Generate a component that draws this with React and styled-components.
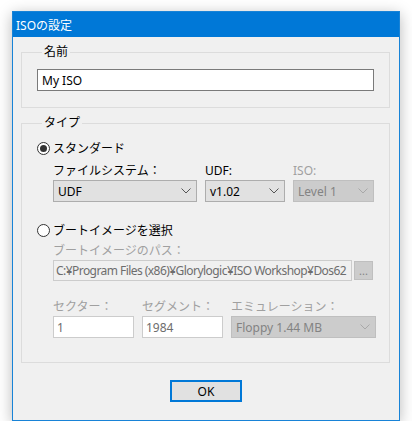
import React from "react";
import styled, { createGlobalStyle, css } from "styled-components";

const GlobalStyle = createGlobalStyle`
  html, body {
    margin: 0;
    padding: 0;
    background: #ffffff;
  }
  body {
    font-family: "Segoe UI", "Noto Sans", "Noto Sans CJK JP", sans-serif;
    font-size: 12px;
    color: #000000;
  }
`;

const Page = styled.div`
  padding: 11px 0 0 12px;
`;

const Window = styled.div`
  width: 386px;
  height: 408px;
  border: 1px solid #1883d7;
  background: #f0f0f0;
  box-shadow: 0 3px 14px rgba(0, 0, 0, 0.28);
  display: flex;
  flex-direction: column;
`;

const TitleBar = styled.div`
  height: 25px;
  background: #0078d7;
  color: #ffffff;
  display: flex;
  align-items: center;
  padding-left: 3px;
  font-size: 12px;
`;

const Body = styled.div`
  padding: 7px 9px 0 8px;
  display: flex;
  flex-direction: column;
`;

const Group = styled.fieldset`
  margin: ${props => props.top || 0}px 0 0 0;
  padding: 0 0 ${props => props.bottom || 0}px 15px;
  border: 1px solid #dcdcdc;
  min-width: 0;
  display: flex;
  flex-direction: column;
`;

const Legend = styled.legend`
  padding: 0 2px;
  margin-left: 5px;
  line-height: 16px;
  font-size: 12px;
`;

const TextInput = styled.div`
  height: 20px;
  border: 1px solid ${props => (props.disabled ? "#cccccc" : "#7a7a7a")};
  background: ${props => (props.readOnly ? "#f0f0f0" : "#ffffff")};
  color: ${props => (props.disabled ? "#6d6d6d" : "#000000")};
  display: flex;
  align-items: center;
  padding-left: 3px;
  white-space: nowrap;
  overflow: hidden;
  box-sizing: border-box;
  ${props =>
    props.width &&
    css`
      width: ${props.width}px;
      height: 22px;
    `}
  ${props =>
    props.grow &&
    css`
      flex: 1;
      height: 21px;
      padding-left: 2px;
      letter-spacing: -0.55px;
    `}
`;

const NameInput = styled(TextInput)`
  width: 337px;
  height: 22px;
  margin-top: 9px;
  padding-left: 4px;
`;

const RadioRow = styled.label`
  display: flex;
  align-items: center;
  height: 16px;
  margin-top: ${props => props.top}px;
  gap: 3px;
`;

const RadioCircle = styled.span`
  width: 11px;
  height: 11px;
  border: 1px solid #333333;
  border-radius: 50%;
  background: #ffffff;
  display: flex;
  align-items: center;
  justify-content: center;
  flex: none;
  &::after {
    content: "";
    display: ${props => (props.checked ? "block" : "none")};
    width: 7px;
    height: 7px;
    border-radius: 50%;
    background: #333333;
  }
`;

const Indent = styled.div`
  padding-left: 16px;
  display: flex;
  flex-direction: column;
`;

const FieldRow = styled.div`
  display: flex;
  gap: 8px;
  margin-top: ${props => props.top || 0}px;
`;

const Field = styled.div`
  display: flex;
  flex-direction: column;
  width: ${props => props.width}px;
  margin-top: ${props => props.top || 0}px;
  gap: 1px;
`;

const FieldLabel = styled.div`
  line-height: 16px;
  color: ${props => (props.disabled ? "#a0a0a0" : "#000000")};
`;

const SelectBox = styled.div`
  height: 22px;
  box-sizing: border-box;
  border: 1px solid ${props => (props.disabled ? "#bfbfbf" : "#adadad")};
  background: ${props => (props.disabled ? "#cccccc" : "#e1e1e1")};
  color: ${props => (props.disabled ? "#838383" : "#000000")};
  display: flex;
  align-items: center;
  justify-content: space-between;
  padding: 0 5px 0 4px;
`;

const PathRow = styled.div`
  display: flex;
  gap: 2px;
  align-items: flex-start;
  width: 320px;
`;

const DotsButton = styled.div`
  width: 19px;
  height: 19px;
  box-sizing: border-box;
  border: 1px solid #bfbfbf;
  background: #cccccc;
  color: #838383;
  display: flex;
  align-items: center;
  justify-content: center;
  font-size: 11px;
  line-height: 1;
  margin-top: 1px;
  flex: none;
`;

const Footer = styled.div`
  display: flex;
  justify-content: center;
  padding-top: 17px;
`;

const OkButton = styled.button`
  width: 72px;
  height: 22px;
  box-sizing: border-box;
  border: 2px solid #0078d7;
  background: #e1e1e1;
  font: inherit;
  color: #000000;
  padding: 0;
  margin-left: 1px;
`;

const Chevron = ({ color }) => (
  <svg width="10" height="6" viewBox="0 0 10 6">
    <polyline points="0.5,0.5 5,5 9.5,0.5" fill="none" stroke={color} strokeWidth="1" />
  </svg>
);

const Select = ({ value, disabled }) => (
  <SelectBox disabled={disabled}>
    <span>{value}</span>
    <Chevron color={disabled ? "#a8a8a8" : "#555555"} />
  </SelectBox>
);

export default function App() {
  return (
    <Page>
      <GlobalStyle />
      <Window>
        <TitleBar>ISOの設定</TitleBar>
        <Body>
          <Group bottom={16}>
            <Legend>名前</Legend>
            <NameInput>My ISO</NameInput>
          </Group>

          <Group top={7} bottom={24}>
            <Legend>タイプ</Legend>
            <RadioRow top={9}>
              <RadioCircle checked />
              スタンダード
            </RadioRow>
            <Indent>
              <FieldRow top={7}>
                <Field width={144}>
                  <FieldLabel>ファイルシステム：</FieldLabel>
                  <Select value="UDF" />
                </Field>
                <Field width={80}>
                  <FieldLabel>UDF:</FieldLabel>
                  <Select value="v1.02" />
                </Field>
                <Field width={81}>
                  <FieldLabel disabled>ISO:</FieldLabel>
                  <Select value="Level 1" disabled />
                </Field>
              </FieldRow>
            </Indent>

            <RadioRow top={20}>
              <RadioCircle />
              ブートイメージを選択
            </RadioRow>
            <Indent>
              <Field width={320} top={5}>
                <FieldLabel disabled>ブートイメージのパス：</FieldLabel>
                <PathRow>
                  <TextInput grow disabled readOnly>
                    C:¥Program Files (x86)¥Glorylogic¥ISO Workshop¥Dos62
                  </TextInput>
                  <DotsButton>...</DotsButton>
                </PathRow>
              </Field>
              <FieldRow top={18}>
                <Field width={81}>
                  <FieldLabel disabled>セクター：</FieldLabel>
                  <TextInput width={81} disabled>1</TextInput>
                </Field>
                <Field width={81}>
                  <FieldLabel disabled>セグメント：</FieldLabel>
                  <TextInput width={81} disabled>1984</TextInput>
                </Field>
                <Field width={145}>
                  <FieldLabel disabled>エミュレーション：</FieldLabel>
                  <Select value="Floppy 1.44 MB" disabled />
                </Field>
              </FieldRow>
            </Indent>
          </Group>

          <Footer>
            <OkButton>OK</OkButton>
          </Footer>
        </Body>
      </Window>
    </Page>
  );
}
